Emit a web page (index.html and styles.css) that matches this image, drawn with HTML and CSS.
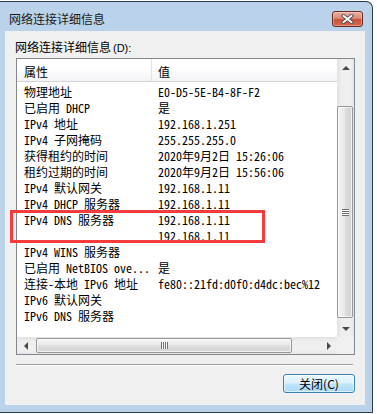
FILE: index.html
```html
<!DOCTYPE html>
<html lang="zh-CN">
<head>
  <meta charset="UTF-8">
  <link rel="stylesheet" href="styles.css">
</head>
<body>
  <div class="window">
    <div class="titlebar">
      <span class="title">网络连接详细信息</span>
      <button class="close">
        <svg width="13" height="10" viewBox="0 0 13 10">
          <path d="M2.5 1.8 L10.5 8.2 M10.5 1.8 L2.5 8.2" stroke="#4a4a4a" stroke-width="3.6" stroke-linecap="square"/>
          <path d="M2.5 1.8 L10.5 8.2 M10.5 1.8 L2.5 8.2" stroke="#ffffff" stroke-width="1.8" stroke-linecap="square"/>
        </svg>
      </button>
    </div>
    <div class="client">
      <div class="label">网络连接详细信息<span class="key">(D):</span></div>
      <div class="listbox">
        <div class="view">
          <div class="header">
            <div class="col">属性</div>
            <div class="col">值</div>
          </div>
          <div class="rows">
            <div class="row"><div>物理地址</div><div>E0-D5-5E-B4-8F-F2</div></div>
            <div class="row"><div>已启用 DHCP</div><div>是</div></div>
            <div class="row"><div>IPv4 地址</div><div>192.168.1.251</div></div>
            <div class="row"><div>IPv4 子网掩码</div><div>255.255.255.0</div></div>
            <div class="row"><div>获得租约的时间</div><div>2020年9月2日 15:26:06</div></div>
            <div class="row"><div>租约过期的时间</div><div>2020年9月2日 15:56:06</div></div>
            <div class="row"><div>IPv4 默认网关</div><div>192.168.1.11</div></div>
            <div class="row"><div>IPv4 DHCP 服务器</div><div>192.168.1.11</div></div>
            <div class="row"><div>IPv4 DNS 服务器</div><div>192.168.1.11</div></div>
            <div class="row"><div></div><div>192.168.1.11</div></div>
            <div class="row"><div>IPv4 WINS 服务器</div><div></div></div>
            <div class="row"><div>已启用 NetBIOS ove...</div><div>是</div></div>
            <div class="row"><div>连接-本地 IPv6 地址</div><div>fe80::21fd:d0f0:d4dc:bec%12</div></div>
            <div class="row"><div>IPv6 默认网关</div><div></div></div>
            <div class="row"><div>IPv6 DNS 服务器</div><div></div></div>
          </div>
        </div>
        <div class="vscroll">
          <div class="sbtn"><i class="arr up"></i></div>
          <div class="track">
            <div class="thumb"><i class="grip"></i></div>
          </div>
          <div class="sbtn"><i class="arr down"></i></div>
        </div>
        <div class="hscroll">
          <div class="sbtn"><i class="arr left"></i></div>
          <div class="track">
            <div class="thumb"><i class="grip"></i></div>
          </div>
          <div class="sbtn"><i class="arr right"></i></div>
        </div>
        <div class="corner"></div>
      </div>
      <div class="sep"></div>
      <button class="btn">关闭(C)</button>
    </div>
  </div>
  <div class="mark"></div>
</body>
</html>
```

FILE: styles.css
```css
* {
  box-sizing: border-box;
}
body {
  margin: 0;
  background: #fff;
  color: #000;
  font-family: "Noto Sans CJK SC", sans-serif;
  font-size: 12px;
}
.window {
  width: 373px;
  margin-top: 1px;
  padding: 0 7px 7px 5px;
  background: #bad2ea;
  border: 1px solid #2d3a48;
  border-left: 0;
  border-top-right-radius: 7px;
}
.titlebar {
  display: flex;
  align-items: center;
  justify-content: space-between;
  height: 29px;
  padding: 5px 2px 0 4px;
}
.title {
  line-height: 14px;
  color: #1a1a1a;
}
.close {
  display: flex;
  align-items: center;
  justify-content: center;
  width: 31px;
  height: 16px;
  padding: 0;
  border: 1px solid #6b2b22;
  border-radius: 3px;
  background: linear-gradient(#eab0a2, #db8a78 45%, #c9523c 52%, #d4694f);
  box-shadow: inset 0 0 0 1px rgba(255, 255, 255, 0.3);
}
.client {
  display: flex;
  flex-direction: column;
  height: 374px;
  padding: 9px 10px 12px 10px;
  background: #f0f0f0;
}
.label {
  line-height: 14px;
}
.label .key {
  margin-left: 2px;
  font-family: "Liberation Sans", sans-serif;
  font-size: 11px;
}
.listbox {
  display: grid;
  grid-template-columns: 320px 17px;
  grid-template-rows: 278px 17px;
  height: 297px;
  margin: 3px 0 0 1px;
  border: 1px solid #828790;
  background: #fff;
}
.view {
  overflow: hidden;
}
.header {
  display: grid;
  grid-template-columns: 135px 1fr;
  height: 23px;
  background: linear-gradient(#ffffff 40%, #f2f3f5);
  border-bottom: 1px solid #d5d5d5;
}
.header .col {
  padding: 6px 0 0 7px;
  line-height: 14px;
}
.header .col:first-child {
  border-right: 1px solid #e0e2e6;
}
.header .col + .col {
  padding-left: 6px;
}
.rows {
  padding-top: 2px;
  font-family: "Noto Sans Mono CJK SC", "Noto Sans CJK SC", monospace;
}
.row {
  display: grid;
  grid-template-columns: 135px 1fr;
  height: 16px;
  line-height: 16px;
  white-space: nowrap;
}
.row > div {
  overflow: hidden;
  padding-left: 7px;
}
.row > div + div {
  padding-left: 6px;
}
.vscroll,
.hscroll {
  display: flex;
}
.vscroll {
  flex-direction: column;
  background: linear-gradient(90deg, #e2e2e2, #eeeeee 25%, #f0f0f0 75%, #e6e6e6);
}
.hscroll {
  background: linear-gradient(#e2e2e2, #eeeeee 25%, #f0f0f0 75%, #e6e6e6);
}
.sbtn {
  display: flex;
  align-items: center;
  justify-content: center;
  flex: 0 0 17px;
}
.vscroll .track {
  flex: 1;
  padding: 30px 1px 0 0;
}
.hscroll .track {
  flex: 1;
  display: flex;
  padding: 1px 0 1px 2px;
}
.thumb {
  display: flex;
  align-items: center;
  justify-content: center;
  border: 1px solid #979797;
  border-radius: 2px;
  box-shadow: inset 0 0 0 1px rgba(255, 255, 255, 0.7);
}
.vscroll .thumb {
  height: 212px;
  background: linear-gradient(90deg, #f4f4f4, #e9e9e9 45%, #dcdcdc 55%, #d2d2d2);
}
.hscroll .thumb {
  width: 256px;
  background: linear-gradient(#f4f4f4, #e9e9e9 45%, #dcdcdc 55%, #d2d2d2);
}
.vscroll .grip {
  width: 7px;
  height: 7px;
  background: repeating-linear-gradient(#6f6f6f 0 1px, #f8f8f8 1px 2px);
}
.hscroll .grip {
  width: 7px;
  height: 7px;
  background: repeating-linear-gradient(90deg, #6f6f6f 0 1px, #f8f8f8 1px 2px);
}
.arr {
  width: 0;
  height: 0;
  border: 4px solid transparent;
}
.arr.up {
  border-top: 0;
  border-bottom-color: #4a4a4a;
}
.arr.down {
  border-bottom: 0;
  border-top-color: #4a4a4a;
}
.arr.left {
  border-left: 0;
  border-right-color: #4a4a4a;
}
.arr.right {
  border-right: 0;
  border-left-color: #4a4a4a;
}
.corner {
  background: #f0f0f0;
}
.sep {
  width: 337px;
  height: 2px;
  margin: 9px 0 0 1px;
  border-top: 1px solid #a0a0a0;
  border-bottom: 1px solid #fff;
}
.btn {
  align-self: flex-end;
  width: 72px;
  height: 20px;
  margin-top: 8px;
  padding: 0;
  border: 1px solid #3c7fb1;
  border-radius: 3px;
  background: linear-gradient(#ecf7fd, #dbf1fc 48%, #c0e6fb 52%, #aad9f4);
  box-shadow: inset 0 0 0 1px rgba(255, 255, 255, 0.6);
  font-family: "Noto Sans CJK SC", sans-serif;
  font-size: 12px;
  line-height: 16px;
  color: #000;
}
.mark {
  position: absolute;
  top: 210px;
  left: 10px;
  width: 255px;
  height: 33px;
  border: 3px solid #f53b3b;
}
```
